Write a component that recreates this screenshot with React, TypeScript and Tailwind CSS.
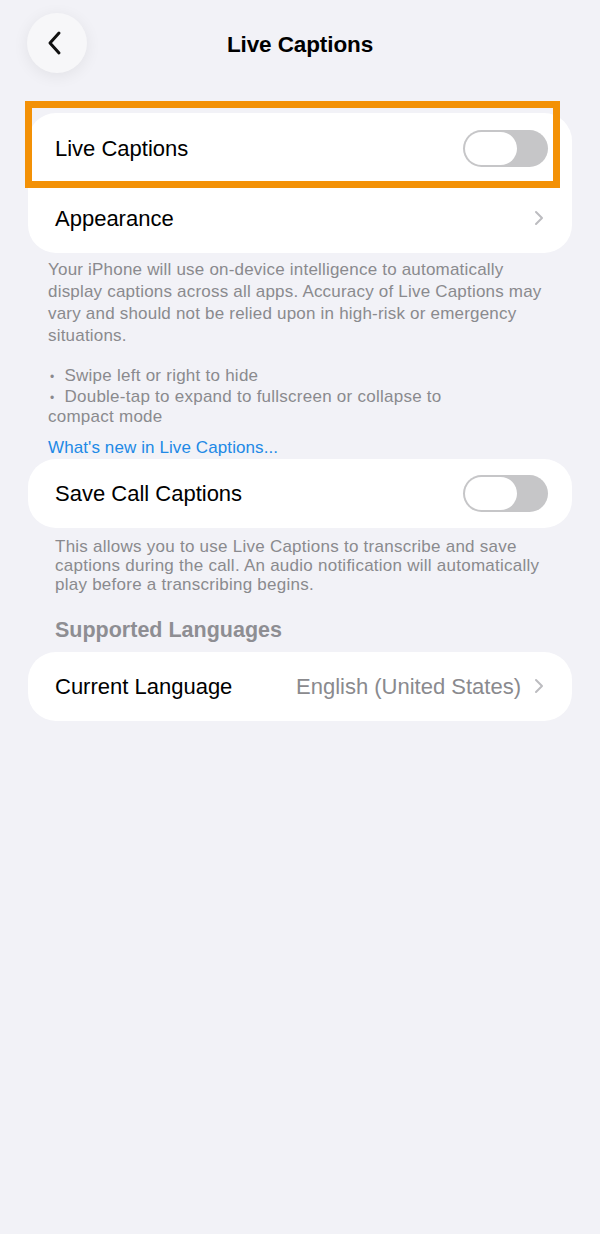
import React from "react";

function Toggle() {
  return (
    <div className="h-[37px] w-[85px] rounded-full bg-[#c6c6c8] p-[2px]">
      <div className="h-full w-[52px] rounded-full bg-white" />
    </div>
  );
}

function Chevron() {
  return (
    <svg width="10" height="16" viewBox="0 0 10 16" fill="none">
      <path d="M2 2l6 6-6 6" stroke="#bcbcc0" strokeWidth="2" strokeLinecap="round" strokeLinejoin="round" />
    </svg>
  );
}

export default function App() {
  return (
    <div className="relative min-h-[1234px] w-[600px] bg-[#f2f2f7] font-['Liberation_Sans',Arial,sans-serif] text-black">
      {/* header */}
      <div className="grid grid-cols-[1fr_auto_1fr] items-center pt-[13px]">
        <div className="pl-[27px]">
          <button className="flex h-[60px] w-[60px] items-center justify-center rounded-full bg-[#f7f7f9] shadow-[0_3px_16px_rgba(0,0,0,0.07)]">
            <svg width="18" height="26" viewBox="0 0 18 26" fill="none" className="-ml-[4px]">
              <path d="M13 3L4 13l9 10" stroke="#111" strokeWidth="3" strokeLinecap="round" strokeLinejoin="round" />
            </svg>
          </button>
        </div>
        <h1 className="pt-[3px] text-[22.5px] font-bold tracking-[-0.1px]">Live Captions</h1>
        <div />
      </div>

      {/* live captions card */}
      <div className="mx-[28px] mt-[40px] rounded-[28px] bg-white">
        <div className="flex h-[70px] items-center justify-between pl-[27px] pr-[24px]">
          <span className="text-[22px]">Live Captions</span>
          <Toggle />
        </div>
        <div className="flex h-[70px] items-center justify-between pl-[27px] pr-[28px]">
          <span className="text-[22px]">Appearance</span>
          <Chevron />
        </div>
      </div>

      <div className="mt-[6px] pl-[48px] pr-[20px] text-[17px] tracking-[0.2px] text-[#8a8a8e]">
        <p className="leading-[22px]">
          Your iPhone will use on-device intelligence to automatically
          <br />
          display captions across all apps. Accuracy of Live Captions may
          <br />
          vary and should not be relied upon in high-risk or emergency
          <br />
          situations.
        </p>
        <p className="mt-[19px] leading-[20.5px] tracking-[0.25px]">
          <span className="pl-[2px] pr-[10px] text-[12px] leading-[0]">•</span>Swipe left or right to hide
          <br />
          <span className="pl-[2px] pr-[10px] text-[12px] leading-[0]">•</span>Double-tap to expand to fullscreen or collapse to
          <br />
          compact mode
        </p>
        <p className="mt-[9px] leading-[22px] tracking-[0.1px] text-[#2189e6]">What's new in Live Captions...</p>
      </div>

      {/* save call captions */}
      <div className="mx-[28px] flex h-[69px] items-center justify-between rounded-[28px] bg-white pl-[27px] pr-[24px]">
        <span className="text-[22px]">Save Call Captions</span>
        <Toggle />
      </div>

      <p className="mt-[9px] pl-[55px] pr-[20px] text-[17px] leading-[19px] tracking-[0.25px] text-[#8a8a8e]">
        This allows you to use Live Captions to transcribe and save
        <br />
        captions during the call. An audio notification will automatically
        <br />
        play before a transcribing begins.
      </p>

      <h2 className="mt-[23px] pl-[55px] text-[21.5px] font-bold leading-[26px] text-[#8e8e93]">Supported Languages</h2>

      <div className="mx-[28px] mt-[9px] flex h-[69px] items-center justify-between rounded-[28px] bg-white pl-[27px] pr-[28px]">
        <span className="text-[22px]">Current Language</span>
        <div className="flex items-center gap-[13px]">
          <span className="text-[22px] text-[#8a8a8e]">English (United States)</span>
          <Chevron />
        </div>
      </div>

      {/* highlight overlay */}
      <div className="absolute left-[25px] top-[101px] h-[87px] w-[535px] border-[7px] border-[#f39106]" />
    </div>
  );
}
